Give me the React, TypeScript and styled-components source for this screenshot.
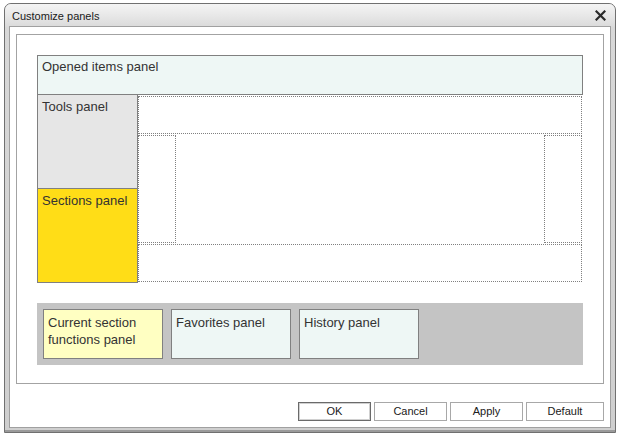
import React from "react";
import styled, { createGlobalStyle } from "styled-components";

const Global = createGlobalStyle`
  html, body { margin: 0; padding: 0; background: #ffffff; }
  body { font-family: "Liberation Sans", Arial, sans-serif; }
`;

const Window = styled.div`
  margin: 3px 0 0 4px;
  width: 612px;
  height: 430px;
  box-sizing: border-box;
  border: 1px solid #707070;
  border-radius: 7px 7px 0 0;
  background: linear-gradient(to right, #a9a9a9 0px, #d9d9d9 3px, #e4e4e4 50%, #d9d9d9 calc(100% - 3px), #a9a9a9 100%);
  display: flex;
  flex-direction: column;
  overflow: hidden;
`;

const TitleBar = styled.div`
  height: 23px;
  flex: none;
  display: flex;
  align-items: center;
  justify-content: space-between;
  padding: 0 9px 0 7px;
  background: linear-gradient(to bottom, #f4f4f4 0%, #e9e9e9 45%, #dadada 100%);
  font-family: "Liberation Sans", Arial, sans-serif;
  font-size: 11px;
  color: #1a1a1a;
`;

const Frame = styled.div`
  flex: 1;
  display: flex;
  padding: 0 5px 5px;
  background: linear-gradient(to bottom, #d8d8d8, #cfcfcf);
  box-shadow: inset 0 -2px 0 #9a9a9a;
`;

const Client = styled.div`
  flex: 1;
  background: #ffffff;
  box-shadow: 0 0 0 1px #a0a0a0;
  padding: 7px 6px 6px;
  display: flex;
  flex-direction: column;
`;

const Group = styled.div`
  height: 350px;
  box-sizing: border-box;
  border: 1px solid #a3a3a3;
  padding: 20px 20px 0;
  display: flex;
  flex-direction: column;
`;

const Panel = styled.div<{ $bg: string }>`
  box-sizing: border-box;
  background: ${(p) => p.$bg};
  border: 1px solid #808080;
  padding: 3px 4px;
  font-size: 13px;
  line-height: 16px;
  color: #333333;
`;

const TopPanel = styled(Panel)`
  height: 40px;
`;

const MainRow = styled.div`
  display: flex;
  height: 188px;
`;

const LeftColumn = styled.div`
  width: 101px;
  display: flex;
  flex-direction: column;
`;

const SidePanel = styled(Panel)`
  height: 94px;
  border-top: none;
  padding-top: 4px;
`;

const Workspace = styled.div`
  flex: 1;
  padding: 1px 1px 0 0;
  display: flex;
  flex-direction: column;
  gap: 1px;
`;

const DottedArea = styled.div<{ $h: number }>`
  box-sizing: border-box;
  height: ${(p) => p.$h}px;
  border: 1px dotted #808080;
`;

const MiddleRow = styled.div`
  height: 108px;
  display: flex;
  justify-content: space-between;
`;

const DottedSide = styled.div`
  box-sizing: border-box;
  width: 38px;
  border: 1px dotted #808080;
`;

const Tray = styled.div`
  margin-top: 20px;
  height: 62px;
  box-sizing: border-box;
  background: #c4c4c4;
  padding: 6px;
  display: flex;
  gap: 8px;
`;

const TrayPanel = styled(Panel)`
  width: 120px;
  height: 50px;
  padding: 4px 4px;
  line-height: 17px;
`;

const Buttons = styled.div`
  margin-top: 18px;
  display: flex;
  justify-content: flex-end;
  gap: 3px;
`;

const Button = styled.button<{ $w: number; $default?: boolean }>`
  width: ${(p) => p.$w}px;
  height: 19px;
  box-sizing: border-box;
  padding: 0;
  margin: 0;
  background: #ffffff;
  border: 1px solid ${(p) => (p.$default ? "#6a6a6a" : "#a8a8a8")};
  box-shadow: ${(p) => (p.$default ? "inset 0 0 0 1px #d0d0d0" : "none")};
  font-family: "Liberation Sans", Arial, sans-serif;
  font-size: 11px;
  color: #202020;
  line-height: 17px;
`;

const CloseIcon = () => (
  <svg width="11" height="11" viewBox="0 0 11 11">
    <path d="M1.5 1.5 L9.5 9.5 M9.5 1.5 L1.5 9.5" stroke="#2a2a2a" strokeWidth="2.2" strokeLinecap="square" />
  </svg>
);

export default function App() {
  return (
    <>
      <Global />
      <Window>
        <TitleBar>
          <span>Customize panels</span>
          <CloseIcon />
        </TitleBar>
        <Frame>
          <Client>
            <Group>
              <TopPanel $bg="#eef7f5">Opened items panel</TopPanel>
              <MainRow>
                <LeftColumn>
                  <SidePanel $bg="#e6e6e6">Tools panel</SidePanel>
                  <SidePanel $bg="#ffdd17">Sections panel</SidePanel>
                </LeftColumn>
                <Workspace>
                  <DottedArea $h={38} />
                  <MiddleRow>
                    <DottedSide />
                    <DottedSide />
                  </MiddleRow>
                  <DottedArea $h={38} />
                </Workspace>
              </MainRow>
              <Tray>
                <TrayPanel $bg="#ffffc2">
                  Current section
                  <br />
                  functions panel
                </TrayPanel>
                <TrayPanel $bg="#eef7f5">Favorites panel</TrayPanel>
                <TrayPanel $bg="#eef7f5">History panel</TrayPanel>
              </Tray>
            </Group>
            <Buttons>
              <Button $w={73} $default>OK</Button>
              <Button $w={73}>Cancel</Button>
              <Button $w={73}>Apply</Button>
              <Button $w={78}>Default</Button>
            </Buttons>
          </Client>
        </Frame>
      </Window>
    </>
  );
}
